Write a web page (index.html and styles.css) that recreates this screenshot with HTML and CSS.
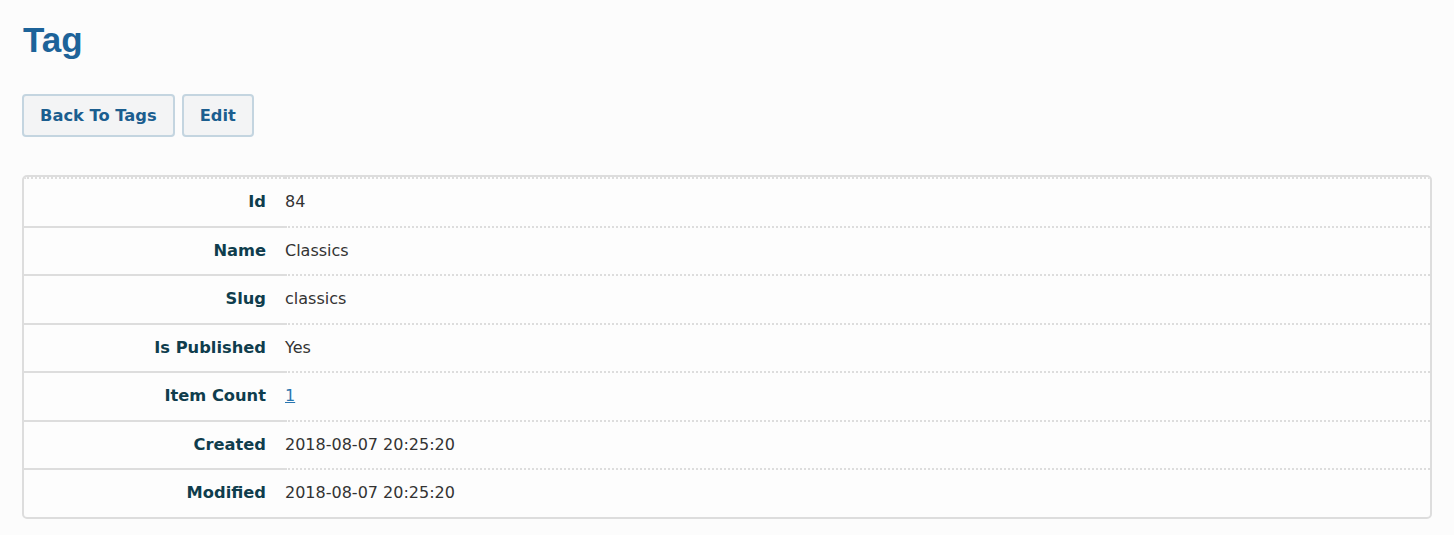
FILE: index.html
```html
<!DOCTYPE html>
<html lang="en">
  <head>
    <meta charset="UTF-8" />
    <meta name="viewport" content="width=device-width, initial-scale=1.0" />
    <title>Tag</title>
    <link rel="stylesheet" href="styles.css">
  </head>

  <body>
    <div class="page">
      <!-- Title -->
      <h1 class="page-title">Tag</h1>

      <!-- Actions -->
      <div class="actions">
        <a href="#" class="btn">Back To Tags</a>
        <a href="#" class="btn">Edit</a>
      </div>

      <!-- Tag Details -->
      <div class="detail-box">
        <table class="detail-table">
          <tr>
            <th>Id</th>
            <td>84</td>
          </tr>
          <tr>
            <th>Name</th>
            <td>Classics</td>
          </tr>
          <tr>
            <th>Slug</th>
            <td>classics</td>
          </tr>
          <tr>
            <th>Is Published</th>
            <td>Yes</td>
          </tr>
          <tr>
            <th>Item Count</th>
            <td><a href="#">1</a></td>
          </tr>
          <tr>
            <th>Created</th>
            <td>2018-08-07 20:25:20</td>
          </tr>
          <tr>
            <th>Modified</th>
            <td>2018-08-07 20:25:20</td>
          </tr>
        </table>
      </div>
    </div>
  </body>
</html>
```

FILE: styles.css
```css
/* General Styles */
body {
  font-family: "DejaVu Sans", Verdana, sans-serif;
  font-size: 16px;
  margin: 0;
  background-color: #fcfcfc;
  color: #333;
}

.page {
  padding: 20px 22px;
}

/* Title */
.page-title {
  font-family: "Liberation Sans", Arial, sans-serif;
  font-size: 35px;
  line-height: 40px;
  font-weight: bold;
  color: #1d6399;
  margin: 0 0 34px 1px;
}

/* Buttons */
.actions {
  display: flex;
  gap: 7px;
}

.btn {
  display: block;
  padding: 10px 16px 10px;
  line-height: 19px;
  font-size: 16.3px;
  font-weight: bold;
  color: #1b5e8f;
  text-decoration: none;
  background-color: #f3f4f5;
  border: 2px solid #c4d5e0;
  border-radius: 4px;
}

/* Detail Table */
.detail-box {
  margin-top: 38px;
  border: 2px solid #dddddd;
  border-radius: 5px;
  background-color: #fdfdfd;
  overflow: hidden;
}

.detail-table {
  width: 100%;
  border-collapse: separate;
  border-spacing: 0;
}

.detail-table th,
.detail-table td {
  padding: 14px 0;
  line-height: 18.5px;
  vertical-align: top;
  border-top: 2px dotted #dddddd;
}

.detail-table th {
  width: 242px;
  padding-right: 19px;
  text-align: right;
  color: #0f3d4d;
  font-weight: bold;
  font-size: 16.3px;
}

.detail-table tr + tr th {
  border-top: 2px solid #dddddd;
}

.detail-table td {
  padding-left: 0;
  text-align: left;
}

.detail-table td a {
  color: #2a76b0;
  text-decoration: underline;
}
```
